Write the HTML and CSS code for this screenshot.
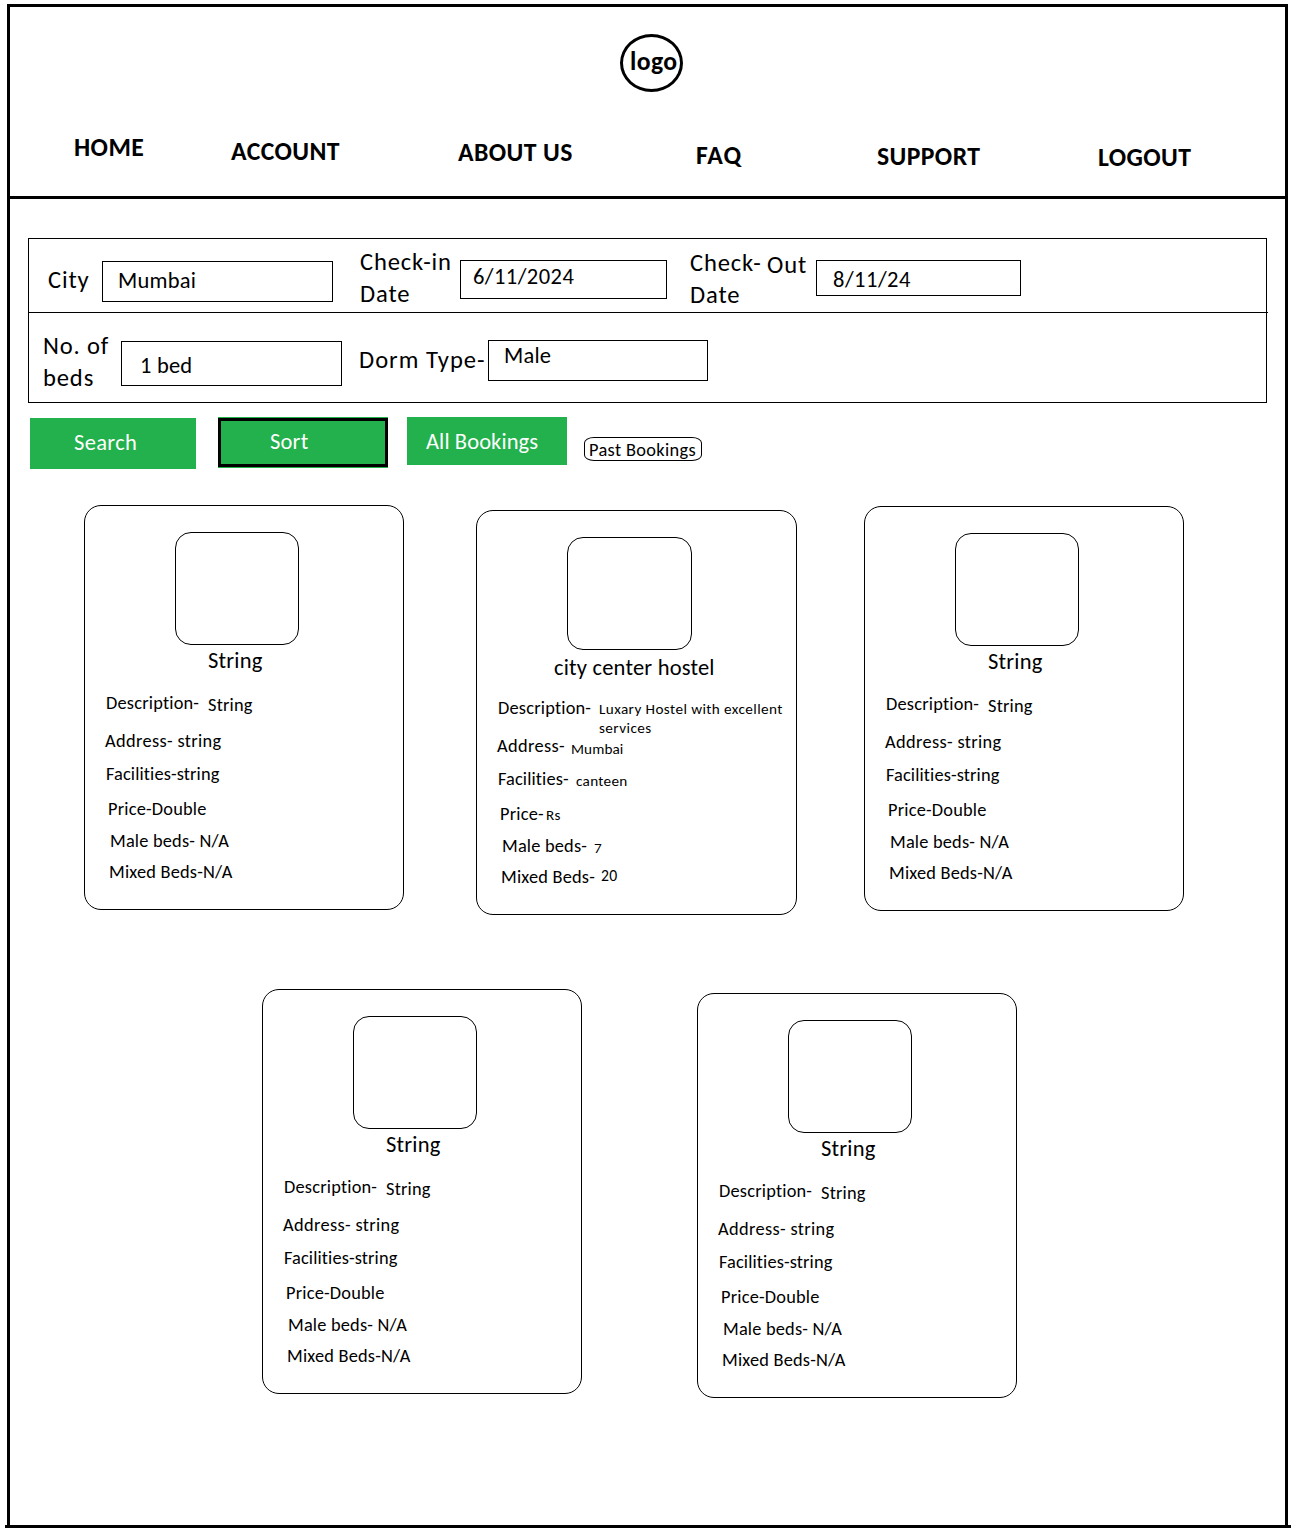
FILE: index.html
```html
<!DOCTYPE html>
<html lang="en">
<head>
<meta charset="utf-8">
<title>Hostel search</title>
<link rel="stylesheet" href="styles.css">
</head>
<body>
<div class="frame">
  <header class="header">
    <div class="logo">logo</div>
    <nav class="nav">
      <a class="nav-home">HOME</a>
      <a class="nav-account">ACCOUNT</a>
      <a class="nav-about">ABOUT US</a>
      <a class="nav-faq">FAQ</a>
      <a class="nav-support">SUPPORT</a>
      <a class="nav-logout">LOGOUT</a>
    </nav>
  </header>

  <section class="search">
    <div class="search-row search-row-top">
      <div class="label city-label">City</div>
      <div class="field city-field">Mumbai</div>
      <div class="label in-label">Check-in<br>Date</div>
      <div class="field in-field">6/11/2024</div>
      <div class="label out-label">Check-<br>Date</div>
      <div class="label out-word">Out</div>
      <div class="field out-field">8/11/24</div>
    </div>
    <div class="search-row search-row-bottom">
      <div class="label beds-label">No. of<br>beds</div>
      <div class="field beds-field">1 bed</div>
      <div class="label dorm-label">Dorm Type-</div>
      <div class="field dorm-field">Male</div>
    </div>
  </section>

  <div class="actions">
    <div class="btn btn-search">Search</div>
    <div class="btn btn-sort">Sort</div>
    <div class="btn btn-all">All Bookings</div>
    <div class="btn-past">Past Bookings</div>
  </div>

  <main>
    <div class="cards cards-first">
      <article class="card card-1">
        <div class="photo"></div>
        <h2 class="title">String</h2>
        <div class="rows">
          <div class="row description"><span class="key">Description-</span><span class="value">String</span></div>
          <div class="row address">Address- string</div>
          <div class="row facilities">Facilities-string</div>
          <div class="row price">Price-Double</div>
          <div class="row male">Male beds- N/A</div>
          <div class="row mixed">Mixed Beds-N/A</div>
        </div>
      </article>
      <article class="card card-2 detailed">
        <div class="photo"></div>
        <h2 class="title">city center hostel</h2>
        <div class="rows">
          <div class="row description"><span class="key">Description-</span><span class="value">Luxary Hostel with excellent<br>services</span></div>
          <div class="row address"><span class="key">Address-</span><span class="value">Mumbai</span></div>
          <div class="row facilities"><span class="key">Facilities-</span><span class="value">canteen</span></div>
          <div class="row price"><span class="key">Price-</span><span class="value">Rs</span></div>
          <div class="row male"><span class="key">Male beds-</span><span class="value">7</span></div>
          <div class="row mixed"><span class="key">Mixed Beds-</span><span class="value">20</span></div>
        </div>
      </article>
      <article class="card card-3">
        <div class="photo"></div>
        <h2 class="title">String</h2>
        <div class="rows">
          <div class="row description"><span class="key">Description-</span><span class="value">String</span></div>
          <div class="row address">Address- string</div>
          <div class="row facilities">Facilities-string</div>
          <div class="row price">Price-Double</div>
          <div class="row male">Male beds- N/A</div>
          <div class="row mixed">Mixed Beds-N/A</div>
        </div>
      </article>
    </div>
    <div class="cards cards-second">
      <article class="card card-4">
        <div class="photo"></div>
        <h2 class="title">String</h2>
        <div class="rows">
          <div class="row description"><span class="key">Description-</span><span class="value">String</span></div>
          <div class="row address">Address- string</div>
          <div class="row facilities">Facilities-string</div>
          <div class="row price">Price-Double</div>
          <div class="row male">Male beds- N/A</div>
          <div class="row mixed">Mixed Beds-N/A</div>
        </div>
      </article>
      <article class="card card-5">
        <div class="photo"></div>
        <h2 class="title">String</h2>
        <div class="rows">
          <div class="row description"><span class="key">Description-</span><span class="value">String</span></div>
          <div class="row address">Address- string</div>
          <div class="row facilities">Facilities-string</div>
          <div class="row price">Price-Double</div>
          <div class="row male">Male beds- N/A</div>
          <div class="row mixed">Mixed Beds-N/A</div>
        </div>
      </article>
    </div>
  </main>
</div>
<div class="baseline"></div>
</body>
</html>
```
FILE: styles.css
```css
* { box-sizing: border-box; }

body {
  margin: 0;
  padding-top: 4px;
  background: #fff;
  color: #000;
  font-family: Calibri, Carlito, Lato, sans-serif;
  letter-spacing: 0.2px;
  white-space: nowrap;
}

.frame {
  width: 1281px;
  height: 1521px;
  margin-left: 7px;
  border: 3px solid #000;
  border-bottom: 0;
}

.baseline {
  width: 1286px;
  height: 3px;
  margin-left: 5px;
  background: #000;
}

/* Header */
.header {
  height: 192px;
  padding-top: 27px;
  border-bottom: 3px solid #000;
  font-size: 25.7px;
  font-weight: 700;
  line-height: 28px;
  letter-spacing: 0.4px;
}

.logo {
  width: 63px;
  height: 58px;
  margin-left: 610px;
  padding: 11px 0 0 7px;
  border: 3px solid #000;
  border-radius: 50%;
}

.nav {
  display: grid;
  grid-template-columns: 157px 227px 238px 181px 221px auto;
  margin-top: 42px;
  padding-left: 64px;
}

.nav-account { padding-top: 4px; }
.nav-about { padding-top: 5px; }
.nav-faq { padding-top: 8px; letter-spacing: 1px; }
.nav-support { padding-top: 9px; }
.nav-logout { padding-top: 10px; }

/* Search form */
.search {
  width: 1239px;
  height: 165px;
  margin: 39px 0 0 18px;
  border: 1px solid #000;
}

.search-row {
  display: flex;
  align-items: flex-start;
}

.search-row-top {
  width: 1239px;
  height: 74px;
  padding-left: 19px;
  border-bottom: 1px solid #000;
}

.search-row-bottom { padding-left: 14px; }

.label {
  flex: none;
  font-size: 24.6px;
  line-height: 32px;
  letter-spacing: 0.85px;
}

.field {
  flex: none;
  border: 1px solid #000;
  font-size: 22.5px;
  line-height: 28px;
}

.city-label { width: 54px; margin-top: 25px; }
.city-field { width: 231px; height: 41px; margin: 22px 27px 0 0; padding: 5px 0 0 15px; }
.in-label { width: 100px; margin-top: 7px; }
.in-field { width: 207px; height: 39px; margin: 21px 23px 0 0; padding: 2px 0 0 12px; letter-spacing: 0.45px; }
.out-label { width: 77px; margin-top: 8px; }
.out-word { width: 49px; margin-top: 10px; }
.out-field { width: 205px; height: 36px; margin-top: 21px; padding: 5px 0 0 16px; letter-spacing: 0.5px; }
.beds-label { width: 78px; margin-top: 17px; }
.beds-field { width: 221px; height: 45px; margin: 28px 17px 0 0; padding: 10px 0 0 18px; }
.dorm-label { width: 129px; margin-top: 31px; letter-spacing: 1px; }
.dorm-field { width: 220px; height: 41px; margin-top: 27px; padding: 1px 0 0 15px; }

/* Action buttons */
.actions {
  display: flex;
  align-items: flex-start;
  height: 52px;
  margin: 14px 0 0 20px;
}

.btn {
  background: #22b14c;
  color: #fff;
  font-size: 22.5px;
  line-height: 28px;
}

.btn-search { width: 166px; height: 51px; margin: 1px 22px 0 0; padding: 11px 0 0 44px; letter-spacing: 0.35px; }

.btn-sort {
  width: 170px;
  height: 49px;
  margin: 1px 19px 0 0;
  padding: 7px 0 0 49px;
  border: 3px solid #000;
  box-shadow: 0 -1px #22b14c, 0 1px #22b14c;
}

.btn-all { width: 160px; height: 48px; margin-right: 17px; padding: 11px 0 0 19px; letter-spacing: 0.1px; }

.btn-past {
  width: 118px;
  height: 24px;
  margin-top: 20px;
  padding: 2px 0 0 4px;
  border: 1px solid #000;
  border-radius: 10px / 6px;
  font-size: 18.35px;
  line-height: 20px;
  letter-spacing: 0.35px;
}

/* Hostel cards */
.cards {
  display: flex;
  align-items: flex-start;
}

.cards-first { height: 410px; margin-top: 36px; padding-left: 74px; }
.cards-second { margin-top: 74px; padding-left: 252px; }

.card {
  width: 320px;
  height: 405px;
  padding: 26px 0 0 20px;
  border: 1px solid #000;
  border-radius: 17px;
}

.card-1 { margin-right: 72px; }
.card-2 { width: 321px; margin: 5px 67px 0 0; }
.card-3 { margin-top: 1px; }
.card-4 { margin-right: 115px; }
.card-5 { margin-top: 4px; }

.photo {
  width: 124px;
  height: 113px;
  margin-left: 70px;
  border: 1px solid #000;
  border-radius: 16px;
}

.detailed .photo { width: 125px; }

.title {
  height: 24px;
  margin: 4px 0 20px 103px;
  font-size: 22.5px;
  font-weight: 400;
  line-height: 24px;
}

.detailed .title { margin: 6px 0 18px 57px; }

.rows {
  display: grid;
  grid-template-rows: 38px 33px 35px 32px 31px 20px;
  font-size: 18.35px;
  line-height: 20px;
}

.row { display: flex; align-items: flex-start; }
.description { padding-left: 1px; }
.address { letter-spacing: 0.35px; }
.facilities { padding-left: 1px; letter-spacing: 0.12px; }
.price { padding-left: 3px; }
.male { padding-left: 5px; }
.mixed { padding-left: 4px; }
.description .key { width: 102px; }
.description .value { padding-top: 2px; }

.detailed .value { font-size: 15.2px; line-height: 19px; padding-top: 2px; }
.detailed .description .value { margin-left: -1px; letter-spacing: 0.42px; }
.detailed .address .key { width: 74px; }
.detailed .address .value { padding-top: 4px; letter-spacing: 0.1px; }
.detailed .facilities .key { width: 78px; }
.detailed .facilities .value { padding-top: 3px; letter-spacing: 0.3px; }
.detailed .price .key { width: 46px; }
.detailed .male .key { width: 92px; }
.detailed .male .value { padding-top: 3px; }
.detailed .mixed .key { width: 100px; }
.detailed .mixed .value { padding-top: 0; font-size: 15.7px; line-height: 18px; }
```
